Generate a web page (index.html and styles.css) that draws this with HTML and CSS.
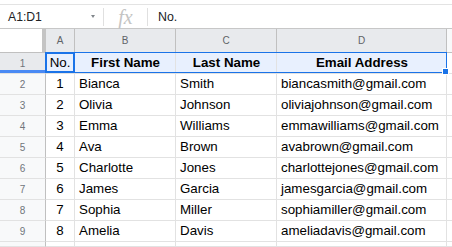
FILE: index.html
```html
<!DOCTYPE html>
<html lang="en">
<head>
  <meta charset="UTF-8">
  <meta name="viewport" content="width=device-width, initial-scale=1.0">
  <title>Contacts - Sheet1</title>
  <link rel="stylesheet" href="styles.css">
</head>
<body>
  <div class="formula-bar">
    <div class="name-box">
      <span>A1:D1</span>
      <span class="caret"></span>
    </div>
    <div class="divider"></div>
    <div class="fx">fx</div>
    <div class="divider"></div>
    <div class="formula">No.</div>
  </div>

  <div class="sheet-wrap">
    <div class="sheet">
      <!-- column headers -->
      <div class="corner"></div>
      <div class="col-head active">A</div>
      <div class="col-head active">B</div>
      <div class="col-head active">C</div>
      <div class="col-head active">D</div>
      <div class="col-head"></div>

      <!-- row 1 (header of the data) -->
      <div class="row-head active frozen">1</div>
      <div class="cell sel center">No.</div>
      <div class="cell sel head-text">First Name</div>
      <div class="cell sel head-text">Last Name</div>
      <div class="cell sel head-text">Email Address</div>
      <div class="cell"></div>

      <div class="row-head">2</div>
      <div class="cell center">1</div>
      <div class="cell">Bianca</div>
      <div class="cell">Smith</div>
      <div class="cell">biancasmith@gmail.com</div>
      <div class="cell"></div>

      <div class="row-head">3</div>
      <div class="cell center">2</div>
      <div class="cell">Olivia</div>
      <div class="cell">Johnson</div>
      <div class="cell">oliviajohnson@gmail.com</div>
      <div class="cell"></div>

      <div class="row-head">4</div>
      <div class="cell center">3</div>
      <div class="cell">Emma</div>
      <div class="cell">Williams</div>
      <div class="cell">emmawilliams@gmail.com</div>
      <div class="cell"></div>

      <div class="row-head">5</div>
      <div class="cell center">4</div>
      <div class="cell">Ava</div>
      <div class="cell">Brown</div>
      <div class="cell">avabrown@gmail.com</div>
      <div class="cell"></div>

      <div class="row-head">6</div>
      <div class="cell center">5</div>
      <div class="cell">Charlotte</div>
      <div class="cell">Jones</div>
      <div class="cell">charlottejones@gmail.com</div>
      <div class="cell"></div>

      <div class="row-head">7</div>
      <div class="cell center">6</div>
      <div class="cell">James</div>
      <div class="cell">Garcia</div>
      <div class="cell">jamesgarcia@gmail.com</div>
      <div class="cell"></div>

      <div class="row-head">8</div>
      <div class="cell center">7</div>
      <div class="cell">Sophia</div>
      <div class="cell">Miller</div>
      <div class="cell">sophiamiller@gmail.com</div>
      <div class="cell"></div>

      <div class="row-head">9</div>
      <div class="cell center">8</div>
      <div class="cell">Amelia</div>
      <div class="cell">Davis</div>
      <div class="cell">ameliadavis@gmail.com</div>
      <div class="cell"></div>

      <!-- next row, only its top edge is in view -->
      <div class="row-head"></div>
      <div class="cell"></div>
      <div class="cell"></div>
      <div class="cell"></div>
      <div class="cell"></div>
      <div class="cell"></div>
    </div>

    <!-- selection A1:D1 -->
    <div class="range"></div>
    <div class="active-cell"></div>
    <div class="fill-handle"></div>
  </div>
</body>
</html>
```

FILE: styles.css
```css
* {
  box-sizing: border-box;
}

body {
  margin: 0;
  padding: 0;
  font-family: 'Liberation Sans', Arial, sans-serif;
  background-color: #fff;
  overflow: hidden;
  height: 247px;
}

.formula-bar {
  margin-top: 4px;
  height: 25px;
  border-top: 1px solid #e3e3e3;
  border-bottom: 1px solid #c7c7c7;
  display: flex;
  align-items: center;
}

.name-box {
  width: 103px;
  padding: 0 8px;
  display: flex;
  align-items: center;
  justify-content: space-between;
  font-size: 12.2px;
  color: #202124;
}

.caret {
  width: 0;
  height: 0;
  border-left: 2.5px solid transparent;
  border-right: 2.5px solid transparent;
  border-top: 3px solid #80868b;
}

.divider {
  width: 1px;
  height: 18px;
  background-color: #e0e0e0;
}

.fx {
  width: 43px;
  text-align: center;
  font-family: 'Liberation Serif', serif;
  font-style: italic;
  font-size: 20px;
  color: #c4c4c4;
  line-height: 20px;
}

.formula {
  padding-left: 10px;
  font-size: 12.4px;
  color: #202124;
}

.sheet-wrap {
  position: relative;
}

.sheet {
  display: grid;
  grid-template-columns: 46px 29px 101px 101px 170px 1fr;
  grid-template-rows: 24px repeat(9, 21px) 5px;
  overflow: hidden;
}

.corner {
  background-color: #fff;
  border-right: 4px solid #c4c4c4;
  border-bottom: 1px solid #c0c0c0;
}

.col-head {
  background-color: #f8f9fa;
  border-right: 1px solid #c0c0c0;
  border-bottom: 1px solid #c0c0c0;
  color: #5f6368;
  font-size: 10px;
  display: flex;
  align-items: center;
  justify-content: center;
}

.col-head.active {
  background-color: #e8eaed;
}

.row-head {
  background-color: #f8f9fa;
  border-right: 1px solid #c0c0c0;
  border-bottom: 1px solid #e2e2e2;
  color: #70757a;
  font-size: 10px;
  display: flex;
  align-items: center;
  justify-content: center;
}

.row-head.active {
  background-color: #e8eaed;
}

.row-head.frozen {
  box-shadow: inset 0 -3px 0 #4a8af4;
}

.cell {
  border-right: 1px solid #e2e2e2;
  border-bottom: 1px solid #e2e2e2;
  padding: 0 3px 0 4px;
  font-size: 13.33px;
  line-height: 20px;
  color: #000;
  white-space: nowrap;
  overflow: hidden;
}

.cell.center {
  text-align: center;
  padding: 0;
}

.cell.sel {
  background-color: #e8f0fe;
}

.cell.head-text {
  text-align: center;
  font-weight: bold;
}

.range {
  position: absolute;
  left: 45px;
  top: 23px;
  width: 402px;
  height: 21px;
  border: 1px solid #1a73e8;
}

.active-cell {
  position: absolute;
  left: 45px;
  top: 23px;
  width: 30px;
  height: 21px;
  border: 2px solid #1a73e8;
}

.fill-handle {
  position: absolute;
  left: 442px;
  top: 39px;
  width: 7px;
  height: 7px;
  background-color: #1a73e8;
  border: 1px solid #fff;
}
```
